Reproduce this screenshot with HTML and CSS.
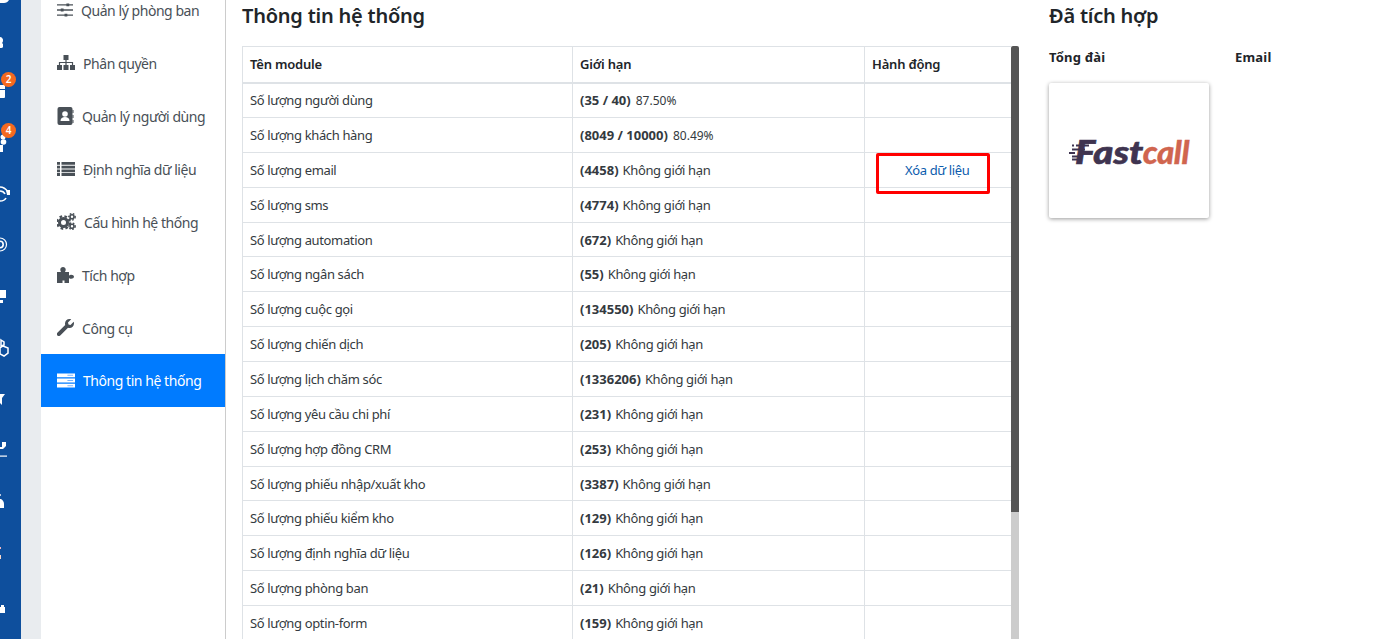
FILE: index.html
```html
<!DOCTYPE html>
<html lang="vi">
<head>
<meta charset="utf-8">
<title>Thông tin hệ thống</title>
<link rel="stylesheet" href="styles.css">
</head>
<body>
<div class="page">
  <nav class="rail">
    <svg class="rail-logo" width="21" height="4" viewBox="0 0 21 4"><path d="M0 0h9c-1 2-3 3-5 3H0z" fill="#fff"/></svg>
    <div class="rail-item"><svg width="21" height="30" viewBox="0 0 21 30"><path d="M0 9c2 0 3 2 3 3s0 2-1 3l1 1v3c0 .5-1 1-3 1z" fill="#fff"/></svg></div>
    <div class="rail-item"><span class="badge">2</span><svg width="21" height="30" viewBox="0 0 21 30"><path d="M0 6h5v4H0zM0 11h5v7c0 .5-.5 1-1 1H0z" fill="#fff"/></svg></div>
    <div class="rail-item"><span class="badge">4</span><svg width="21" height="30" viewBox="0 0 21 30"><circle cx="3" cy="7" r="2.500" fill="#fff"/><circle cx="3.500" cy="12" r="2.800" fill="#fff"/><path d="M0 15h3v7H0z" fill="#fff"/></svg></div>
    <div class="rail-item"><svg width="21" height="30" viewBox="0 0 21 30"><path d="M0 5c3 0 6 2 8 5M0 9c2 0 4 1 5 3M0 19c3 0 5-1 6-3" fill="none" stroke="#fff" stroke-width="1.600"/><path d="M6 8h4v5H7z" fill="#fff"/></svg></div>
    <div class="rail-item"><svg width="21" height="30" viewBox="0 0 21 30"><circle cx="0" cy="11.500" r="3.200" fill="none" stroke="#fff" stroke-width="1.600"/><circle cx="0" cy="11.500" r="6.500" fill="none" stroke="#fff" stroke-width="1.200"/></svg></div>
    <div class="rail-item"><svg width="21" height="30" viewBox="0 0 21 30"><path d="M0 6h6v8H0zM0 16h3v3H0z" fill="#fff"/></svg></div>
    <div class="rail-item"><svg width="21" height="30" viewBox="0 0 21 30"><path d="M1 5l3 2v3l-3 1zM3 11l5 2v5l-4 3-4-2v-6z" fill="none" stroke="#fff" stroke-width="1.500"/></svg></div>
    <div class="rail-item"><svg width="21" height="30" viewBox="0 0 21 30"><path d="M0 8h5l-3 4v7l-2-2z" fill="#fff"/></svg></div>
    <div class="rail-item"><svg width="21" height="30" viewBox="0 0 21 30"><path d="M0 17.500h7v1.200H0z" fill="#fff"/><path d="M0 9h2V4h4v4l-3 3H0z" fill="#fff"/></svg></div>
    <div class="rail-item"><svg width="21" height="30" viewBox="0 0 21 30"><path d="M0 10h1c2 1 3 3 3 5v4H0z" fill="#fff"/><path d="M0 5h1v2H0z" fill="#b9c9e0"/></svg></div>
    <div class="rail-item"><svg width="21" height="30" viewBox="0 0 21 30"><path d="M0 7h1v2H0z" fill="#f2b7c0"/><path d="M0 15h1v4H0z" fill="#fbd8c8"/></svg></div>
    <div class="rail-item"><svg width="21" height="30" viewBox="0 0 21 30"><path d="M0 16h1v-2h3v2h1v6H0z" fill="#fff"/></svg></div>
  </nav>
  <div class="gutter"></div>
  <aside class="menu">
    <a class="menu-item">
      <svg class="mi" width="16" height="14" viewBox="0 0 17 14"><path d="M0 1.500h17M0 7h17M0 12.500h17" stroke="#495057" stroke-width="1.400"/><path d="M10 0h3v3h-3zM4 5.500h3v3H4zM8 11h3v3H8z" fill="#495057"/></svg>
      <span>Quản lý phòng ban</span>
    </a>
    <a class="menu-item">
      <svg class="mi" width="18" height="15" viewBox="0 0 18 15"><path d="M6.500 0h5v5h-5zM0 10h5v5H0zM6.500 10h5v5h-5zM13 10h5v5h-5z" fill="#495057"/><path d="M9 5v5M2.500 10V7.500h13V10" fill="none" stroke="#495057" stroke-width="1.200"/></svg>
      <span>Phân quyền</span>
    </a>
    <a class="menu-item">
      <svg class="mi" width="17" height="18" viewBox="0 0 16 18"><rect width="15" height="18" rx="2" fill="#495057"/><path d="M15 3h1v3h-1zM15 8h1v3h-1zM15 13h1v3h-1z" fill="#495057"/><circle cx="7.500" cy="7" r="2.800" fill="#fff"/><path d="M3 14c0-3 2-4 4.500-4s4.500 1 4.500 4z" fill="#fff"/></svg>
      <span>Quản lý người dùng</span>
    </a>
    <a class="menu-item">
      <svg class="mi" width="18" height="14" viewBox="0 0 18 14"><path d="M0 0h3v2.800H0zM4.500 0H18v2.800H4.500zM0 3.700h3v2.800H0zM4.500 3.700H18v2.800H4.500zM0 7.400h3v2.800H0zM4.500 7.400H18v2.800H4.500zM0 11.100h3v2.800H0zM4.500 11.100H18v2.800H4.500z" fill="#495057"/></svg>
      <span>Định nghĩa dữ liệu</span>
    </a>
    <a class="menu-item">
      <svg class="mi" width="19" height="17" viewBox="0 0 19 17"><circle cx="6.500" cy="9.500" r="4" fill="none" stroke="#495057" stroke-width="3"/><circle cx="6.500" cy="9.500" r="6.200" fill="none" stroke="#495057" stroke-width="2.400" stroke-dasharray="2.600 2.300"/><circle cx="15" cy="3.800" r="2" fill="none" stroke="#495057" stroke-width="1.600"/><circle cx="15" cy="3.800" r="3.200" fill="none" stroke="#495057" stroke-width="1.400" stroke-dasharray="1.600 1.500"/><circle cx="15" cy="13.200" r="2" fill="none" stroke="#495057" stroke-width="1.600"/><circle cx="15" cy="13.200" r="3.200" fill="none" stroke="#495057" stroke-width="1.400" stroke-dasharray="1.600 1.500"/></svg>
      <span>Cấu hình hệ thống</span>
    </a>
    <a class="menu-item">
      <svg class="mi" width="17" height="16" viewBox="0 0 17 16"><path d="M0 5h4c-.5-1-.7-1.500-.7-2.500C3.300 1 4.500 0 6 0s2.700 1 2.700 2.500c0 1-.2 1.500-.7 2.500h4v3.500c1-.7 1.500-.8 2.200-.8 1.500 0 2.800.8 2.800 2s-1.300 2-2.800 2c-.7 0-1.200-.1-2.200-.8V16H7.500v-2.500h-2V16H0z" fill="#495057"/></svg>
      <span>Tích hợp</span>
    </a>
    <a class="menu-item">
      <svg class="mi" width="17" height="17" viewBox="0 0 17 17"><path d="M17 4.500c0 2.500-2 4.500-4.500 4.500-.5 0-1 0-1.500-.2L3.500 16.300c-1 1-2.300 1-3.100.2s-.8-2.100.2-3.100L8.200 6c-.2-.5-.2-1-.2-1.500C8 2 10 0 12.500 0c.6 0 1.200.1 1.700.3L11 3.500 11.500 5.500 13.500 6l3.200-3.200c.2.500.3 1.100.3 1.700z" fill="#495057"/></svg>
      <span>Công cụ</span>
    </a>
    <a class="menu-item active">
      <svg class="mi" width="18" height="15" viewBox="0 0 19 15"><path d="M0 0h19v4H0zM0 5.500h19v4H0zM0 11h19v4H0z" fill="#fff"/><path d="M11 7h6v1h-6zM11 12.500h6v1h-6zM11 1.500h6v1h-6z" fill="#7ab5ff"/></svg>
      <span>Thông tin hệ thống</span>
    </a>
  </aside>
  <main class="content">
    <section class="system">
      <h2 class="title">Thông tin hệ thống</h2>
      <div class="table-wrap">
        <table class="limits">
          <colgroup><col class="c1"><col class="c2"><col class="c3"></colgroup>
          <thead>
            <tr><th>Tên module</th><th>Giới hạn</th><th>Hành động</th></tr>
          </thead>
          <tbody>
            <tr><td>Số lượng người dùng</td><td><b>(35 / 40)</b> <small>87.50%</small></td><td></td></tr>
            <tr><td>Số lượng khách hàng</td><td><b>(8049 / 10000)</b> <small>80.49%</small></td><td></td></tr>
            <tr><td>Số lượng email</td><td><b>(4458)</b> Không giới hạn</td><td class="action"><a class="link">Xóa dữ liệu</a><span class="marker"></span></td></tr>
            <tr><td>Số lượng sms</td><td><b>(4774)</b> Không giới hạn</td><td></td></tr>
            <tr><td>Số lượng automation</td><td><b>(672)</b> Không giới hạn</td><td></td></tr>
            <tr><td>Số lượng ngân sách</td><td><b>(55)</b> Không giới hạn</td><td></td></tr>
            <tr><td>Số lượng cuộc gọi</td><td><b>(134550)</b> Không giới hạn</td><td></td></tr>
            <tr><td>Số lượng chiến dịch</td><td><b>(205)</b> Không giới hạn</td><td></td></tr>
            <tr><td>Số lượng lịch chăm sóc</td><td><b>(1336206)</b> Không giới hạn</td><td></td></tr>
            <tr><td>Số lượng yêu cầu chi phí</td><td><b>(231)</b> Không giới hạn</td><td></td></tr>
            <tr><td>Số lượng hợp đồng CRM</td><td><b>(253)</b> Không giới hạn</td><td></td></tr>
            <tr><td>Số lượng phiếu nhập/xuất kho</td><td><b>(3387)</b> Không giới hạn</td><td></td></tr>
            <tr><td>Số lượng phiếu kiểm kho</td><td><b>(129)</b> Không giới hạn</td><td></td></tr>
            <tr><td>Số lượng định nghĩa dữ liệu</td><td><b>(126)</b> Không giới hạn</td><td></td></tr>
            <tr><td>Số lượng phòng ban</td><td><b>(21)</b> Không giới hạn</td><td></td></tr>
            <tr><td>Số lượng optin-form</td><td><b>(159)</b> Không giới hạn</td><td></td></tr>
          </tbody>
        </table>
        <div class="scrollbar"><div class="thumb"></div><div class="track"></div></div>
      </div>
    </section>
    <section class="integrated">
      <h2 class="title">Đã tích hợp</h2>
      <div class="columns">
        <div class="col">
          <h3 class="sub">Tổng đài</h3>
          <div class="card">
            <div class="logo">
              <svg class="logo-lines" width="20" height="17" viewBox="0 0 20 17"><path d="M3 1.500h2M7 1.500h13M0 9h6M3 5.500h13M3 12.500h7M3 15.500h6" stroke="#3f3450" stroke-width="2"/></svg>
              <span class="fast">Fast</span><span class="call">call</span>
            </div>
          </div>
        </div>
        <div class="col">
          <h3 class="sub">Email</h3>
        </div>
      </div>
    </section>
  </main>
</div>
</body>
</html>
```
FILE: styles.css
```css
* { box-sizing: border-box; }
html, body { margin: 0; height: 639px; overflow: hidden; background: #fff; }
body { font-family: "Noto Sans", "Open Sans", sans-serif; font-size: 13px; color: #343a40; }
.page { display: flex; height: 639px; overflow: hidden; }

.rail { width: 21px; flex: none; background: #0e4f9d; display: flex; flex-direction: column; }
.rail-logo { display: block; height: 4px; flex: none; }
.rail-item { position: relative; height: 51.2px; flex: none; padding-top: 24px; }
.rail-item svg { display: block; }
.badge { position: absolute; left: 1px; top: 17px; width: 15px; height: 15px; border-radius: 50%; background: #f4691f; color: #fff; font-size: 10px; font-weight: 600; line-height: 15px; text-align: center; }

.gutter { width: 20px; flex: none; background: #e9ecef; }

.menu { width: 185px; flex: none; border-right: 1px solid #ccc; display: flex; flex-direction: column; margin-top: -17px; height: 656px; }
.menu-item { height: 53px; flex: none; display: flex; align-items: center; gap: 8px; padding-left: 16px; font-size: 14px; letter-spacing: -.45px; color: #495057; }
.menu-item span { position: relative; top: 1px; }
.menu-item .mi { flex: none; }
.menu-item.active { background: #007bff; color: #fff; }
.menu-item.active span { top: 0; }

.content { flex: 1; display: flex; min-width: 0; padding-left: 16px; }
.system { width: 777px; flex: none; }
.integrated { flex: 1; padding-left: 30px; }
.title { margin: 0; height: 46px; padding-top: 1px; font-size: 20px; line-height: 30px; font-weight: 600; letter-spacing: -.22px; color: #212529; }

.table-wrap { display: flex; height: 593px; }
.limits { width: 769px; flex: none; border-collapse: collapse; table-layout: fixed; align-self: flex-start; }
.c1 { width: 330px; }
.c2 { width: 292px; }
.limits th, .limits td { border: 1px solid #dee2e6; padding: 0 8px 0 7px; text-align: left; white-space: nowrap; }
.limits th { height: 36.150px; font-size: 13px; font-weight: 600; letter-spacing: -.2px; color: #212529; border-bottom-width: 2px; }
.limits td { height: 34.870px; letter-spacing: -.36px; }
.limits th:last-child, .limits td:last-child { border-right: 0; }
.limits b { font-weight: 700; letter-spacing: 0; margin-right: 1px; }
.limits small { font-size: 12px; letter-spacing: 0; margin-left: 1px; }
.action { position: relative; }
.limits td.action { padding-left: 40px; }
.link { color: #0b5cad; }
.marker { position: absolute; left: 11px; top: 0; width: 114px; height: 41px; border: 3px solid #f00; border-radius: 2px; }

.scrollbar { width: 8px; flex: none; display: flex; flex-direction: column; }
.thumb { height: 466px; background: #555; border-radius: 2px 2px 0 0; }
.track { flex: 1; background: #ccc; }

.columns { display: flex; }
.col { width: 186px; flex: none; }
.sub { margin: 1px 0 15px; font-size: 13px; line-height: 21px; font-weight: 700; letter-spacing: .2px; color: #212529; height: 21px; }
.card { width: 160px; height: 135px; border-radius: 2px; background: #fff; box-shadow: 0 1px 4px rgba(0,0,0,.4); display: flex; align-items: center; justify-content: center; }
.logo { position: relative; display: flex; align-items: baseline; padding-left: 6px; font-family: "Lato", sans-serif; font-style: italic; font-weight: 900; font-size: 33px; line-height: 36px; }
.logo-lines { position: absolute; left: 0; top: 11px; }
.fast { color: #3f3450; display: inline-block; margin-right: 9px; transform: scaleX(1.16); transform-origin: left center; -webkit-text-stroke: .6px #3f3450; }
.call { color: #d0654f; letter-spacing: -.5px; -webkit-text-stroke: .3px #d0654f; }
```
